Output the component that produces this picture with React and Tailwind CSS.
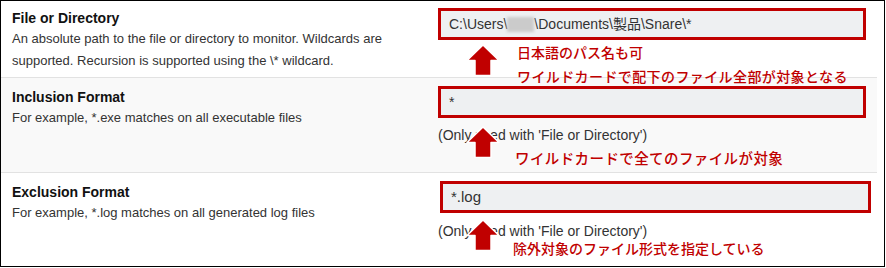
import React from 'react';

const RED = 'text-[#c00000]';

// Flecha roja hacia arriba con halo blanco
const UpArrow = ({ className }) => (
  <svg className={className} width="34" height="33" viewBox="0 0 34 33">
    <polygon
      points="17,1 33,16.5 25,16.5 25,31.5 9,31.5 9,16.5 1,16.5"
      fill="#c00000"
      stroke="#ffffff"
      strokeWidth="1.5"
      strokeLinejoin="round"
    />
  </svg>
);

const Note = ({ className, children }) => (
  <div
    className={`absolute z-10 ${RED} leading-[24px] font-medium whitespace-nowrap ${className}`}
    style={{ fontFamily: '"Noto Sans CJK JP", sans-serif' }}
  >
    {children}
  </div>
);

const Field = ({ className, children }) => (
  <div className={`h-[32px] border-[3px] border-[#c00000] bg-[#eef0f2] flex items-center pl-[8px] text-[#333] ${className}`}>
    <span className="whitespace-nowrap">{children}</span>
  </div>
);

const Label = ({ title, children, className }) => (
  <div className={`w-[437px] shrink-0 pl-[11px] ${className}`}>
    <div className="text-[14px] leading-[20px] font-bold text-[#111]">{title}</div>
    <div className="text-[13px] leading-[22px] text-[#333] w-[410px]">{children}</div>
  </div>
);

const OnlyUsed = ({ className }) => (
  <div className={`text-[14px] leading-[20px] text-[#333] ${className}`}>(Only used with 'File or Directory')</div>
);

export default function App() {
  return (
    <div
      className="w-[885px] h-[267px] border border-black bg-white overflow-hidden"
      style={{ fontFamily: '"Liberation Sans", Arial, "Noto Sans CJK JP", sans-serif' }}
    >
      {/* File or Directory */}
      <div className="relative flex w-[876px] h-[77px] border-b border-[#e2e2e2] bg-white">
        <Label title="File or Directory" className="pt-[7px]">
          An absolute path to the file or directory to monitor. Wildcards are supported. Recursion is supported using the \* wildcard.
        </Label>
        <div className="pt-[7px]">
          <Field className="w-[428px] text-[14px]">
            C:\Users\
            <span className="inline-block align-middle w-[27px] h-[15px] bg-[#cbcbcb] blur-[1.5px]" />
            \Documents\製品\Snare\*
          </Field>
        </div>
        <UpArrow className="absolute z-10 left-[465px] top-[43px]" />
        <Note className="left-[516px] top-[39px] text-[14px]">
          <div>日本語のパス名も可</div>
          <div className="tracking-[0.4px]">ワイルドカードで配下のファイル全部が対象となる</div>
        </Note>
      </div>

      {/* Inclusion Format */}
      <div className="relative flex w-[876px] h-[95px] border-b border-[#e2e2e2] bg-[#f9f9f9]">
        <Label title="Inclusion Format" className="pt-[9px]">
          For example, *.exe matches on all executable files
        </Label>
        <div className="pt-[8px]">
          <Field className="w-[428px] text-[14px]">*</Field>
          <OnlyUsed className="mt-[7px]" />
        </div>
        <UpArrow className="absolute z-10 left-[465px] top-[48px]" />
        <Note className="left-[514px] top-[68px] text-[14.5px] tracking-[0.4px]">ワイルドカードで全てのファイルが対象</Note>
      </div>

      {/* Exclusion Format */}
      <div className="relative flex w-[876px] h-[93px] bg-white">
        <Label title="Exclusion Format" className="pt-[9px]">
          For example, *.log matches on all generated log files
        </Label>
        <div className="pt-[8px] pl-[2px]">
          <Field className="w-[431px] text-[15px]">*.log</Field>
          <OnlyUsed className="mt-[8px] -ml-[2px]" />
        </div>
        <UpArrow className="absolute z-10 left-[465px] top-[46px]" />
        <Note className="left-[512px] top-[63px] text-[14px]">除外対象のファイル形式を指定している</Note>
      </div>
    </div>
  );
}
